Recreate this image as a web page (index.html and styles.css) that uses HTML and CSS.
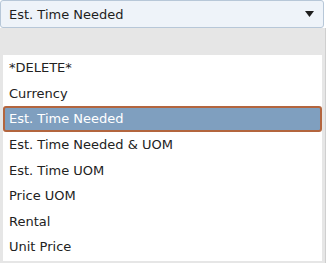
FILE: index.html
```html
<!DOCTYPE html>
<html>
<head>
<meta charset="utf-8">
<link rel="stylesheet" href="styles.css">
</head>
<body>
<div class="combo">
  <div class="select">
    <span class="value">Est. Time Needed</span>
    <svg class="arrow" width="9" height="6" viewBox="0 0 9 6"><path d="M0 0H9L4.5 6Z" fill="#1e1e1e"/></svg>
  </div>
  <div class="panel">
    <ul class="list">
      <li class="item">*DELETE*</li>
      <li class="item">Currency</li>
      <li class="item selected">Est. Time Needed</li>
      <li class="item">Est. Time Needed &amp; UOM</li>
      <li class="item">Est. Time UOM</li>
      <li class="item">Price UOM</li>
      <li class="item">Rental</li>
      <li class="item">Unit Price</li>
    </ul>
  </div>
</div>
</body>
</html>
```

FILE: styles.css
```css
html, body {
  margin: 0;
  padding: 0;
  background: #ffffff;
}
body {
  font-family: "DejaVu Sans", Verdana, sans-serif;
  font-size: 13px;
  color: #222222;
  width: 326px;
  height: 263px;
  overflow: hidden;
}
.combo {
  width: 326px;
}
.select {
  box-sizing: border-box;
  width: 324px;
  height: 28px;
  border: 1px solid #b7c7d8;
  border-radius: 3px;
  background: #eef3f9;
  display: flex;
  align-items: center;
  justify-content: space-between;
  padding: 0 9px 0 8px;
}
.value {
  color: #1e1e1e;
}
.arrow {
  display: block;
}
.panel {
  box-sizing: border-box;
  width: 326px;
  height: 235px;
  background: #e6e6e6;
  border-right: 1px solid #cfcfcf;
  padding: 27px 3px 0 3px;
}
.list {
  list-style: none;
  margin: 0;
  padding: 0;
  width: 319px;
  height: 206px;
  background: #ffffff;
}
.item {
  box-sizing: border-box;
  height: 25.6px;
  display: flex;
  align-items: center;
  padding-left: 6px;
  color: #222222;
}
.item.selected {
  background: #7f9fbf;
  border: 2px solid #b3653e;
  border-radius: 3px;
  padding-left: 4px;
  color: #ffffff;
}
```
